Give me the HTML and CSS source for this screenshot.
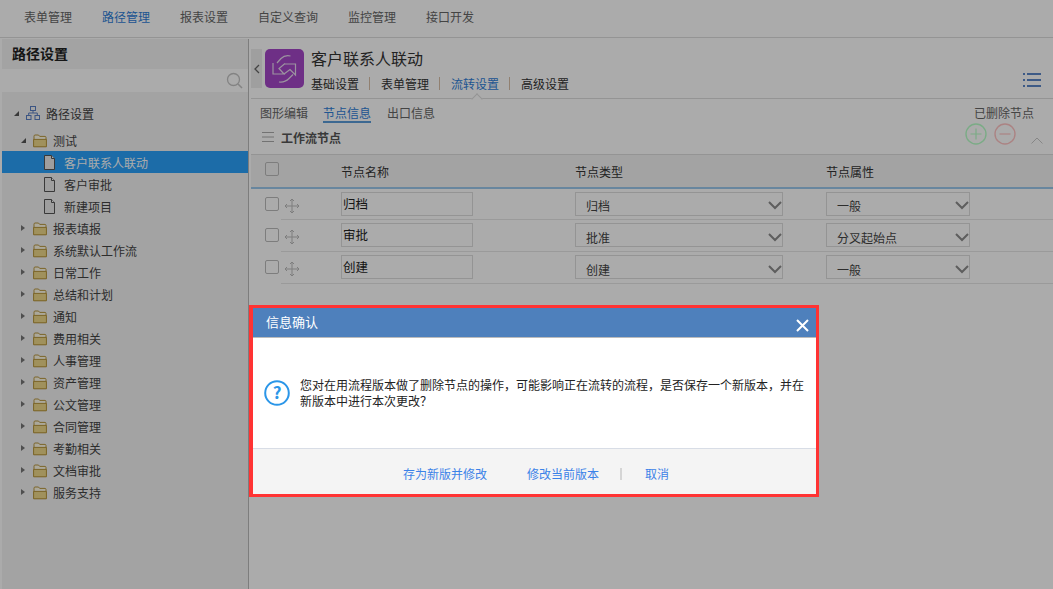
FILE: index.html
```html
<!DOCTYPE html>
<html lang="zh-CN">
<head>
    <meta charset="UTF-8">
    <title>路径设置</title>
    <link rel="stylesheet" href="styles.css">
</head>
<body>
    <svg class="defs" width="0" height="0">
        <symbol id="folder" viewBox="0 0 14 15">
            <path d="M1 13.500V3.200C1 2.500 1.400 2 2 2h3.500l1.200 1.400H12c.6 0 1 .4 1 1v9.100z" fill="#fffbe8" stroke="#b8963c"/>
            <path d="M.6 13.800V6.400h12.800v7.400z" fill="#efd98a" stroke="#b8963c"/>
        </symbol>
        <symbol id="file" viewBox="0 0 11 15">
            <path d="M.5.5h7l3 3v11H.5z" fill="#ececec" stroke="#555"/>
            <path d="M7.500.5v3h3" fill="#fff" stroke="#555"/>
        </symbol>
        <symbol id="drag" viewBox="0 0 16 16">
            <path d="M8 1v14M1 8h14M6 3l2-2 2 2M6 13l2 2 2-2M3 6 1 8l2 2M13 6l2 2-2 2" fill="none" stroke="#bbb"/>
        </symbol>
        <symbol id="down" viewBox="0 0 14 9">
            <path d="M1 1l6 6 6-6" fill="none" stroke="#8c8c8c" stroke-width="2"/>
        </symbol>
    </svg>

    <div class="topnav">
        <a>表单管理</a>
        <a class="active">路径管理</a>
        <a>报表设置</a>
        <a>自定义查询</a>
        <a>监控管理</a>
        <a>接口开发</a>
    </div>

    <div class="main">
        <div class="sidebar">
            <h2>路径设置</h2>
            <div class="searchbox">
                <svg width="17" height="17" viewBox="0 0 17 17"><circle cx="7.500" cy="7.500" r="6" fill="none" stroke="#c4c4c4" stroke-width="1.300"/><path d="M12 12l4 4" stroke="#c4c4c4" stroke-width="1.600"/></svg>
            </div>
            <div class="tree">
                <div class="node root">
                    <i class="arrow open"></i>
                    <svg class="orgicon" width="14" height="14" viewBox="0 0 14 14"><g fill="none" stroke="#5a7fc4"><rect x="4.500" y=".5" width="5" height="4"/><rect x=".5" y="9.500" width="4.500" height="4"/><rect x="9" y="9.500" width="4.500" height="4"/><path d="M7 4.500v2.500M2.700 9.500V7h8.600v2.500"/></g></svg>
                    <span>路径设置</span>
                </div>
                <div class="node"><i class="arrow open"></i><svg class="ficon" width="14" height="15"><use href="#folder"/></svg><span>测试</span></div>
                <div class="node leaf selected"><svg class="ficon" width="11" height="15"><use href="#file"/></svg><span>客户联系人联动</span></div>
                <div class="node leaf"><svg class="ficon" width="11" height="15"><use href="#file"/></svg><span>客户审批</span></div>
                <div class="node leaf"><svg class="ficon" width="11" height="15"><use href="#file"/></svg><span>新建项目</span></div>
                <div class="node"><i class="arrow"></i><svg class="ficon" width="14" height="15"><use href="#folder"/></svg><span>报表填报</span></div>
                <div class="node"><i class="arrow"></i><svg class="ficon" width="14" height="15"><use href="#folder"/></svg><span>系统默认工作流</span></div>
                <div class="node"><i class="arrow"></i><svg class="ficon" width="14" height="15"><use href="#folder"/></svg><span>日常工作</span></div>
                <div class="node"><i class="arrow"></i><svg class="ficon" width="14" height="15"><use href="#folder"/></svg><span>总结和计划</span></div>
                <div class="node"><i class="arrow"></i><svg class="ficon" width="14" height="15"><use href="#folder"/></svg><span>通知</span></div>
                <div class="node"><i class="arrow"></i><svg class="ficon" width="14" height="15"><use href="#folder"/></svg><span>费用相关</span></div>
                <div class="node"><i class="arrow"></i><svg class="ficon" width="14" height="15"><use href="#folder"/></svg><span>人事管理</span></div>
                <div class="node"><i class="arrow"></i><svg class="ficon" width="14" height="15"><use href="#folder"/></svg><span>资产管理</span></div>
                <div class="node"><i class="arrow"></i><svg class="ficon" width="14" height="15"><use href="#folder"/></svg><span>公文管理</span></div>
                <div class="node"><i class="arrow"></i><svg class="ficon" width="14" height="15"><use href="#folder"/></svg><span>合同管理</span></div>
                <div class="node"><i class="arrow"></i><svg class="ficon" width="14" height="15"><use href="#folder"/></svg><span>考勤相关</span></div>
                <div class="node"><i class="arrow"></i><svg class="ficon" width="14" height="15"><use href="#folder"/></svg><span>文档审批</span></div>
                <div class="node"><i class="arrow"></i><svg class="ficon" width="14" height="15"><use href="#folder"/></svg><span>服务支持</span></div>
            </div>
        </div>

        <div class="content">
            <div class="head">
                <div class="collapse">
                    <svg width="6" height="10" viewBox="0 0 6 10"><path d="M5 1 1 5l4 4" fill="none" stroke="#666" stroke-width="1.300"/></svg>
                </div>
                <div class="appicon">
                    <svg width="30" height="30" viewBox="0 0 30 30"><g fill="none" stroke="#e8dcee" stroke-width="1.200"><path d="M20.500 2c-3.500-.8-7 0-9.500 2.500L7 9"/><path d="M3 9v11h11l-5-5.500 6-5"/><path d="M9 28c3.500.5 7-.5 10-3.500l4-4"/><path d="M15 10h10.500v11L20 15.500 14 20"/></g></svg>
                </div>
                <div class="headtext">
                    <h1>客户联系人联动</h1>
                    <div class="tabs">
                        <a>基础设置</a><i></i>
                        <a>表单管理</a><i></i>
                        <a class="active">流转设置</a><i></i>
                        <a>高级设置</a>
                    </div>
                </div>
                <svg class="listicon" width="18" height="14" viewBox="0 0 18 14"><g fill="#5b87c8"><rect y="0" width="2" height="2"/><rect y="6" width="2" height="2"/><rect y="12" width="2" height="2"/><rect x="4" y="0" width="14" height="2"/><rect x="4" y="6" width="14" height="2"/><rect x="4" y="12" width="14" height="2"/></g></svg>
                <span class="notch"></span>
            </div>

            <div class="subtabs">
                <a>图形编辑</a>
                <a class="active">节点信息</a>
                <a>出口信息</a>
                <span class="deleted">已删除节点</span>
            </div>

            <div class="section">
                <div class="sectitle">
                    <svg width="12" height="10" viewBox="0 0 12 10"><path d="M0 .5h12M0 5h12M0 9.500h12" stroke="#aaa"/></svg>
                    <b>工作流节点</b>
                </div>
                <div class="secbtns">
                    <svg width="22" height="22" viewBox="0 0 22 22"><circle cx="11" cy="11" r="10" fill="none" stroke="#b8ffc8" stroke-width="1.400"/><path d="M11 5.500v11M5.500 11h11" stroke="#b8ffc8" stroke-width="1.200"/></svg>
                    <svg width="22" height="22" viewBox="0 0 22 22"><circle cx="11" cy="11" r="10" fill="none" stroke="#ffc4c4" stroke-width="1.400"/><path d="M5.500 11h11" stroke="#ffc4c4" stroke-width="1.200"/></svg>
                    <svg class="upicon" width="12" height="7" viewBox="0 0 12 7"><path d="M.5 6.500 6 1l5.500 5.500" fill="none" stroke="#c8c8c8"/></svg>
                </div>
            </div>

            <table class="nodes">
                <thead>
                    <tr>
                        <th class="c1"><span class="check"></span></th>
                        <th class="c2"></th>
                        <th class="c3">节点名称</th>
                        <th class="c4">节点类型</th>
                        <th>节点属性</th>
                    </tr>
                </thead>
                <tbody>
                    <tr>
                        <td class="c1"><span class="check"></span></td>
                        <td class="c2"><svg width="16" height="16"><use href="#drag"/></svg></td>
                        <td class="c3"><div class="field">归档</div></td>
                        <td class="c4"><div class="select wide"><span>归档</span><svg width="14" height="9"><use href="#down"/></svg></div></td>
                        <td><div class="select"><span>一般</span><svg width="14" height="9"><use href="#down"/></svg></div></td>
                    </tr>
                    <tr>
                        <td class="c1"><span class="check"></span></td>
                        <td class="c2"><svg width="16" height="16"><use href="#drag"/></svg></td>
                        <td class="c3"><div class="field">审批</div></td>
                        <td class="c4"><div class="select wide"><span>批准</span><svg width="14" height="9"><use href="#down"/></svg></div></td>
                        <td><div class="select"><span>分叉起始点</span><svg width="14" height="9"><use href="#down"/></svg></div></td>
                    </tr>
                    <tr>
                        <td class="c1"><span class="check"></span></td>
                        <td class="c2"><svg width="16" height="16"><use href="#drag"/></svg></td>
                        <td class="c3"><div class="field">创建</div></td>
                        <td class="c4"><div class="select wide"><span>创建</span><svg width="14" height="9"><use href="#down"/></svg></div></td>
                        <td><div class="select"><span>一般</span><svg width="14" height="9"><use href="#down"/></svg></div></td>
                    </tr>
                </tbody>
            </table>
        </div>
    </div>

    <div class="overlay"></div>

    <div class="dialog">
        <div class="dlghead">
            <span>信息确认</span>
            <svg width="13" height="13" viewBox="0 0 13 13"><path d="M1 1l11 11M12 1 1 12" stroke="#fff" stroke-width="2"/></svg>
        </div>
        <div class="dlgbody">
            <svg width="26" height="26" viewBox="0 0 26 26"><circle cx="13" cy="13" r="11.800" fill="none" stroke="#2b96e8" stroke-width="2"/><text x="13" y="19" text-anchor="middle" class="qmark">?</text></svg>
            <p>您对在用流程版本做了删除节点的操作，可能影响正在流转的流程，是否保存一个新版本，并在新版本中进行本次更改？</p>
        </div>
        <div class="dlgfoot">
            <a>存为新版并修改</a>
            <a>修改当前版本</a>
            <i></i>
            <a>取消</a>
        </div>
    </div>
</body>
</html>
```

FILE: styles.css
```css
*{
    margin: 0;
    padding: 0;
    box-sizing: border-box;
    font-family: "Noto Sans CJK SC", "Liberation Sans", sans-serif;
}
body{
    width: 100vw;
    height: 100vh;
    overflow: hidden;
    background: #fff;
    color: #333;
    font-size: 12px;
    display: flex;
    flex-direction: column;
}
.defs{
    position: absolute;
}
a{
    cursor: pointer;
}

/* top bar */
.topnav{
    height: 38px;
    flex-shrink: 0;
    display: flex;
    gap: 30px;
    padding: 0 24px 4px;
    align-items: center;
    border-bottom: 1px solid #ddd;
    color: #666;
}
.topnav .active{
    color: #2f80d8;
}
.main{
    flex: 1;
    display: flex;
    min-height: 0;
}

/* left tree */
.sidebar{
    width: 247px;
    margin-left: 2px;
    margin-top: 1px;
    flex-shrink: 0;
    background: #f3f3f3;
    border-right: 1px solid #bbb;
}
.sidebar h2{
    height: 30px;
    line-height: 28px;
    padding-left: 10px;
    font-size: 14px;
    font-weight: 700;
    color: #222;
}
.searchbox{
    height: 23px;
    background: #fff;
    display: flex;
    align-items: center;
    justify-content: flex-end;
    padding-right: 5px;
}
.tree{
    padding-top: 10px;
}
.node{
    height: 22px;
    display: flex;
    align-items: center;
    padding-left: 19px;
    color: #444;
}
.node.root{
    height: 26px;
    padding-left: 12px;
    padding-bottom: 4px;
    margin-bottom: 1px;
}
.node.leaf{
    padding-left: 42px;
}
.node.selected{
    background: #2aa1fb;
    color: #fff;
}
.arrow{
    width: 0;
    height: 0;
    margin-right: 8px;
    border-left: 4px solid #777;
    border-top: 3px solid transparent;
    border-bottom: 3px solid transparent;
}
.arrow.open{
    border-left: 5px solid transparent;
    border-top: 0;
    border-bottom: 5px solid #555;
    margin-right: 7px;
}
.root .arrow{
    margin-right: 7px;
}
.orgicon{
    margin-right: 6px;
}
.ficon{
    margin-right: 6px;
}
.leaf .ficon{
    margin-right: 9px;
}

/* right part */
.content{
    flex: 1;
    min-width: 0;
    padding-left: 2px;
}
.head{
    height: 61px;
    position: relative;
    display: flex;
    padding-top: 11px;
    border-bottom: 1px solid #ddd;
}
.collapse{
    width: 11px;
    height: 39px;
    margin-right: 3px;
    background: #eee;
    display: flex;
    align-items: center;
    justify-content: center;
}
.appicon{
    width: 39px;
    height: 39px;
    border-radius: 5px;
    background: #a546c8;
    display: flex;
    align-items: center;
    justify-content: center;
}
.headtext{
    margin-left: 7px;
}
.headtext h1{
    font-size: 16px;
    font-weight: 400;
    line-height: 18px;
    color: #333;
}
.tabs{
    display: flex;
    align-items: center;
    margin-top: 7px;
    height: 18px;
    color: #333;
}
.tabs i{
    width: 1px;
    height: 13px;
    margin: 0 11px 0 10px;
    background: #d8bfa8;
}
.tabs .active{
    color: #2f80d8;
}
.listicon{
    position: absolute;
    right: 12px;
    top: 35px;
}
.notch{
    position: absolute;
    left: 222px;
    bottom: -1px;
    width: 8px;
    height: 8px;
    margin-bottom: -4px;
    background: #fff;
    border-left: 1px solid #ddd;
    border-top: 1px solid #ddd;
    transform: rotate(45deg);
}
.subtabs{
    display: flex;
    gap: 15px;
    height: 24px;
    padding: 5px 0 0 9px;
    color: #666;
    line-height: 18px;
    position: relative;
}
.subtabs a{
    height: 19px;
}
.subtabs .active{
    color: #2f80d8;
    border-bottom: 2px solid #5a9bd8;
    margin-right: 1px;
}
.subtabs .deleted{
    margin-left: auto;
    margin-right: 19px;
}
.section{
    height: 32px;
    display: flex;
    justify-content: space-between;
    border-bottom: 1px solid #ddd;
}
.sectitle{
    display: flex;
    align-items: center;
    height: 28px;
    padding-left: 11px;
    gap: 7px;
}
.sectitle b{
    color: #555;
}
.secbtns{
    display: flex;
    gap: 7px;
    padding: 0 10px 0 0;
}
.upicon{
    margin: 14px 0 0 8px;
}

/* node table */
.nodes{
    width: 100%;
    table-layout: fixed;
    border-collapse: collapse;
}
.nodes th{
    height: 33px;
    background: #f3f3f3;
    border-bottom: 2px solid #9cc8ec;
    font-weight: 400;
    text-align: left;
    color: #333;
}
.nodes td{
    height: 32px;
    border-bottom: 1px solid #e6e6e6;
    vertical-align: middle;
}
.nodes tbody tr:first-child td{
    height: 31px;
}
.nodes td.c1{
    border-bottom: 0;
}
.c1{
    width: 30px;
    padding-left: 14px;
}
.c2{
    width: 60px;
}
.c3{
    width: 234px;
}
.c4{
    width: 251px;
}
.c2 svg{
    display: block;
    margin: 4px 0 0 3px;
}
.check{
    display: block;
    width: 14px;
    height: 14px;
    border: 1px solid #bbb;
    border-radius: 2px;
}
td .check{
    margin-top: -1px;
}
th .check{
    margin-top: -5px;
}
.field{
    width: 132px;
    height: 24px;
    border: 1px solid #ddd;
    padding-left: 1px;
    line-height: 22px;
    font-size: 12.5px;
    color: #222;
}
.select{
    width: 144px;
    height: 24px;
    border: 1px solid #ddd;
    padding: 4px 0 0 10px;
    display: flex;
    justify-content: space-between;
    align-items: center;
    color: #444;
}
.select.wide{
    width: 208px;
}

/* dialog */
.overlay{
    position: absolute;
    inset: 0;
    background: rgba(0, 0, 0, .33);
}
.dialog{
    position: absolute;
    left: 249px;
    top: 305px;
    width: 570px;
    height: 192px;
    border: 3px solid #ff3333;
    border-left-width: 4px;
    background: #fff;
    display: flex;
    flex-direction: column;
}
.dlghead{
    height: 30px;
    flex-shrink: 0;
    background: #4e80bc;
    border-bottom: 1px solid #bbb;
    color: #fff;
    font-size: 13px;
    display: flex;
    align-items: center;
    justify-content: space-between;
    padding: 0 7px 3px 13px;
}
.dlghead svg{
    margin-top: 8px;
}
.dlgbody{
    flex: 1;
    display: flex;
    align-items: center;
    padding: 0 10px 0 11px;
    gap: 10px;
    color: #222;
}
.dlgbody svg{
    flex-shrink: 0;
}
.dlgbody p{
    line-height: 16px;
    width: 506px;
}
.qmark{
    font-size: 17px;
    font-weight: 700;
    fill: #2b96e8;
}
.dlgfoot{
    height: 46px;
    flex-shrink: 0;
    background: #f4f4f4;
    border-top: 1px solid #d8dde6;
    display: flex;
    align-items: center;
    padding: 4px 0 0 150px;
    color: #3b82e8;
}
.dlgfoot a:nth-child(2){
    margin-left: 40px;
}
.dlgfoot i{
    width: 2px;
    height: 12px;
    background: #d5d5d5;
    margin: 0 23px 0 21px;
}
```
